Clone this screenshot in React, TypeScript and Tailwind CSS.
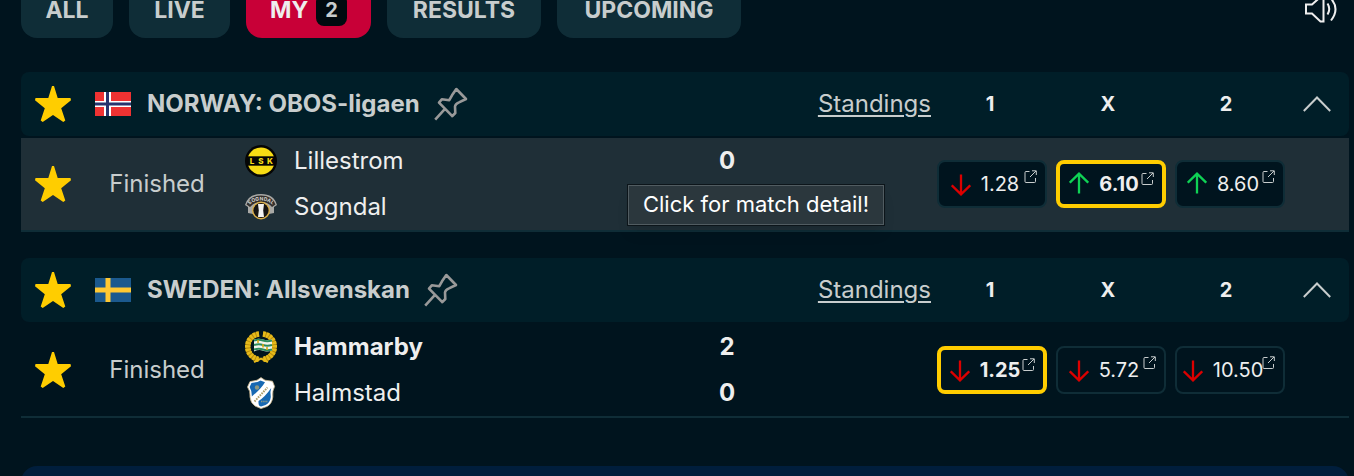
import { clsx } from "clsx";

type Odd = { value: string; trend: "up" | "down"; won?: boolean };

function Star() {
  return (
    <svg viewBox="0 0 36 36" className="size-9" fill="#ffcd00" aria-hidden="true">
      <path d="M17 0h2l3.7 12H35.5L36 14.3 26.2 22.3 30.3 34.5 28.3 36 18 29 7.7 36 5.7 34.5 9.8 22.3 0 14.3.5 12H13.3Z" />
    </svg>
  );
}

function Pin() {
  return (
    <svg
      viewBox="0 0 34 34"
      className="size-[34px]"
      fill="none"
      stroke="#999"
      strokeWidth="2.6"
      strokeLinejoin="round"
      aria-hidden="true"
    >
      <path d="M22.3 2 32 12 25 15.4Q21.2 17 21 19.5L21.3 26 18.3 29.2 5 15.7 7.8 12.3 15.3 13.2 18 8.3ZM11.2 21.7 1.2 32.7" />
    </svg>
  );
}

function Arrow({ trend }: { trend: "up" | "down" }) {
  return (
    <svg
      viewBox="0 0 20 22"
      className={clsx("h-[22px] w-5", trend === "down" ? "mt-0.5 text-[#dc0000]" : "-mt-0.5 rotate-180 text-[#0fd255]")}
      fill="none"
      stroke="currentColor"
      strokeWidth="2.3"
      aria-hidden="true"
    >
      <path d="M10 .5V20M.8 11.3 10 20.3 19.2 11.3" />
    </svg>
  );
}

function External() {
  return (
    <svg
      viewBox="0 0 13 13"
      className="absolute top-2 right-2 size-[13px]"
      fill="none"
      stroke="#c8cdcd"
      aria-hidden="true"
    >
      <path d="M5.5 1.5H2Q1 1.5 1 2.5V11.5Q1 12.5 2 12.5H10.5Q11.5 12.5 11.5 11.5V8M8 .8H12.3V5M12 1 6 7" />
    </svg>
  );
}

function NorwayFlag() {
  return (
    <svg viewBox="0 0 36 24" className="h-6 w-9" role="img" aria-label="Norway">
      <path fill="#ef3232" d="M0 0h36v24H0z" />
      <path fill="#fff" d="M9 0h7v24H9zM0 9h36v6H0z" />
      <path fill="#28346e" d="M11 0h3v24h-3zM0 10.5h36v3H0z" />
    </svg>
  );
}

function SwedenFlag() {
  return (
    <svg viewBox="0 0 36 24" className="h-6 w-9" role="img" aria-label="Sweden">
      <path fill="#1b598e" d="M0 0h36v24H0z" />
      <path fill="#ffc832" d="M10.5 0h5v24h-5zM0 9.5h36v5H0z" />
    </svg>
  );
}

function LillestromLogo() {
  return (
    <svg viewBox="0 0 32 32" className="size-8" aria-hidden="true">
      <circle cx="16" cy="16" r="16" fill="#050505" />
      <circle cx="16" cy="16" r="13.6" fill="#f7dc14" />
      <path fill="#050505" d="M1 11.3h30v9.4H1z" />
      <g
        textAnchor="middle"
        className="font-['Inter',sans-serif] text-[8px] font-extrabold"
        fill="#f7dc14"
      >
        <text x="7" y="19">L</text>
        <text x="16" y="19">S</text>
        <text x="25" y="19">K</text>
      </g>
    </svg>
  );
}

function SogndalLogo() {
  return (
    <svg viewBox="0 0 32 32" className="size-8" aria-hidden="true">
      <path fill="#a9a9a6" d="M0 14Q3 3 16 3T32 14L29 16V22L24 23H8L3 22V16Z" />
      <path fill="#34302d" d="M1.5 13.5Q5 4.5 16 4.5T30.5 13.5L27 16Q23 11 16 11T5 16Z" />
      <path id="sogndal-arc" fill="none" d="M4 14.5Q8 9.5 16 9.5T28 14.5" />
      <text className="font-['Inter',sans-serif] text-[5px] font-bold" fill="#d6d6d2">
        <textPath href="#sogndal-arc" startOffset="50%" textAnchor="middle">
          SOGNDAL
        </textPath>
      </text>
      <circle cx="16" cy="19.5" r="9" fill="#dcb04a" />
      <circle cx="16" cy="19.5" r="7.6" fill="#171513" />
      <path fill="#f4f4f2" d="M13 13h6l-.8 6.5.8 6.5h-6l.8-6.5Z" />
    </svg>
  );
}

function HammarbyLogo() {
  return (
    <svg viewBox="0 0 32 32" className="size-8" aria-hidden="true">
      <g fill="none" stroke="#b98d0c">
        <path strokeWidth="5" d="M14 3C-1 5-1 26 14 28.5M18 3C33 5 33 26 18 28.5" />
      </g>
      <g fill="none" stroke="#e6ba1a">
        <path strokeWidth="5.6" strokeDasharray="2.4 1" d="M14 3C-1 5-1 26 14 28.5" />
        <path strokeWidth="5.6" strokeDasharray="2.4 1" d="M18 3C33 5 33 26 18 28.5" />
        <path strokeWidth="2" d="M9 31 16 27.5 23 31" />
      </g>
      <path fill="#f3f5ec" d="M9 8.5Q14 7 18 8.5T27 8.5V19.5Q22 21.5 18 19.8T9 20.5Z" />
      <path
        fill="none"
        stroke="#2d8b5d"
        strokeWidth="2"
        d="M9 9.5Q14 8 18 9.5T27 9.5M9 14Q14 12.5 18 14T27 14M9 18.5Q14 17 18 18.5T27 18.5"
      />
      <path stroke="#d9ab10" strokeWidth="1.6" d="M13 9v3M18 13v3.5M22 16v3" />
    </svg>
  );
}

function HalmstadLogo() {
  return (
    <svg viewBox="0 0 32 32" className="size-8" aria-hidden="true">
      <path
        fill="#fff"
        stroke="#c9b58b"
        strokeWidth=".8"
        d="M16 .6 20 3.2 27.5 4.2 29.6 9.5Q27 14 27.8 20 27 27 22 29.5L16 31.6 10 29Q5.5 26 5 20 5.6 14 2.5 10L5 4.6 12 3.2Z"
      />
      <path fill="#1768b2" d="M15.5 3.5 20 5.2Q16 12 6.8 19.5 7 14 4.6 10L6.5 6 12.5 5Z" />
      <path fill="#1768b2" d="M26.2 11Q24.8 15 25.8 20 25 26 20.5 28L16 29.6Q13 29 13.5 24 20 20 26.2 11Z" />
      <circle cx="12" cy="10.5" r="2.2" fill="#8f9a82" />
      <path stroke="#ad9c68" strokeWidth="2" strokeDasharray="1.6 1" d="M9.5 24.5 22.5 10.5" />
      <path stroke="#8f9a82" strokeWidth="1.4" strokeDasharray="1.4 .8" d="M16 24.5H23" />
    </svg>
  );
}

const tabs = [
  { label: "ALL", width: "w-[92px]" },
  { label: "LIVE", width: "w-[101px]" },
  { label: "MY", width: "w-[125px]", count: 2 },
  { label: "RESULTS", width: "w-[154px]" },
  { label: "UPCOMING", width: "w-[184px]" },
];

const leagues = [
  {
    name: "NORWAY: OBOS-ligaen",
    flag: <NorwayFlag />,
    hovered: true,
    teams: [
      { name: "Lillestrom", logo: <LillestromLogo />, score: "0", won: false },
      { name: "Sogndal", logo: <SogndalLogo />, score: "", won: false },
    ],
    odds: [
      { value: "1.28", trend: "down" },
      { value: "6.10", trend: "up", won: true },
      { value: "8.60", trend: "up" },
    ] as Odd[],
  },
  {
    name: "SWEDEN: Allsvenskan",
    flag: <SwedenFlag />,
    hovered: false,
    teams: [
      { name: "Hammarby", logo: <HammarbyLogo />, score: "2", won: true },
      { name: "Halmstad", logo: <HalmstadLogo />, score: "0", won: false },
    ],
    odds: [
      { value: "1.25", trend: "down", won: true },
      { value: "5.72", trend: "down" },
      { value: "10.50", trend: "down" },
    ] as Odd[],
  },
];

function OddButton({ odd }: { odd: Odd }) {
  return (
    <button
      type="button"
      className={clsx(
        "relative flex h-12 items-center justify-center gap-2.5 rounded-lg bg-[#00141e] pr-3.5 text-xl text-[#eee]",
        odd.won ? "border-4 border-[#ffcd00] font-bold" : "border-2 border-[#0f2d37]",
      )}
    >
      <Arrow trend={odd.trend} />
      {odd.value}
      <External />
    </button>
  );
}

function League({ league }: { league: (typeof leagues)[number] }) {
  return (
    <section className="flex flex-col gap-0.5">
      <header className="flex h-16 items-center rounded-lg bg-[#001e28]">
        <button type="button" aria-label="Remove league from favourites" className="ml-3.5">
          <Star />
        </button>
        <span className="ml-6">{league.flag}</span>
        <h2 className="ml-4 font-bold text-[#c8cdcd]">{league.name}</h2>
        <button type="button" aria-label="Pin league" className="ml-3.5">
          <Pin />
        </button>
        <a href="#standings" className="ml-auto text-[#c8cdcd] underline decoration-2 underline-offset-3">
          Standings
        </a>
        <div className="grid w-[354px] grid-cols-3 text-center text-xl font-bold text-[#eee]">
          <span>1</span>
          <span>X</span>
          <span>2</span>
        </div>
        <button type="button" aria-label="Collapse league" className="flex w-16 justify-center">
          <svg viewBox="0 0 28 16" className="h-4 w-7" fill="none" stroke="#c8cdcd" strokeWidth="2">
            <path d="M.8 15 14 1.5 27.2 15" />
          </svg>
        </button>
      </header>

      <div
        className={clsx(
          "relative flex items-center border-b-2 border-[#0f2d37] pr-16",
          league.hovered && "bg-[#1f2f37]",
        )}
      >
        <button type="button" aria-label="Remove match from favourites" className="ml-3.5">
          <Star />
        </button>
        <span className="w-[172px] text-center text-[#c8cdcd]">Finished</span>
        <ul className="ml-0.5 flex-1 text-[#eee]">
          {league.teams.map((team) => (
            <li key={team.name} className="flex h-[46px] items-center gap-[17px]">
              {team.logo}
              <span className={clsx("flex-1", team.won && "font-bold")}>{team.name}</span>
              <span className="w-20 text-center font-bold">{team.score}</span>
            </li>
          ))}
        </ul>
        <div className="ml-[170px] grid w-[348px] grid-cols-3 gap-[9px]">
          {league.odds.map((odd) => (
            <OddButton key={odd.value} odd={odd} />
          ))}
        </div>
        {league.hovered && (
          <div
            role="tooltip"
            className="absolute top-[47px] right-[465px] border border-[#515c61] bg-[#2b373d] px-3.5 pt-px pb-[3px] text-[22px] leading-[34px] whitespace-nowrap text-white shadow-lg outline outline-[#0c151a]"
          >
            Click for match detail!
          </div>
        )}
      </div>
    </section>
  );
}

export default function App() {
  return (
    <div className="h-screen overflow-hidden bg-[#00141e] pr-[5px] pl-[21px] font-['Inter','Liberation_Sans',sans-serif] text-2xl">
      <div className="-mt-5 flex items-center justify-between">
        <nav className="flex gap-4">
          {tabs.map((tab) => (
            <button
              key={tab.label}
              type="button"
              className={clsx(
                "flex h-[58px] items-center justify-center gap-2 rounded-2xl pt-0.5 text-[23px] font-bold",
                tab.width,
                tab.count ? "bg-[#c80037] text-[#eee]" : "bg-[#0f2d37] text-[#c8cdcd]",
              )}
            >
              {tab.label}
              {tab.count && (
                <span className="rounded-lg bg-[#010a0f] px-[9px] text-xl leading-8 text-[#c8cdcd]">{tab.count}</span>
              )}
            </button>
          ))}
        </nav>
        <button type="button" aria-label="Sound on" className="mr-3">
          <svg viewBox="0 0 32 28" className="h-7 w-8" fill="none" stroke="#eee" strokeWidth="2">
            <path d="M1 9.5H7L16 1.5H18.5V26.5H15.5L7 18.5H1ZM22.5 8.5Q26 14 22.5 19.5M26 3.5Q35 14 26 25.5" />
          </svg>
        </button>
      </div>

      <main className="mt-[34px] flex flex-col gap-[26px]">
        {leagues.map((league) => (
          <League key={league.name} league={league} />
        ))}
      </main>

      <aside className="mt-12 h-16 rounded-2xl bg-[#001e3c]" />
    </div>
  );
}
